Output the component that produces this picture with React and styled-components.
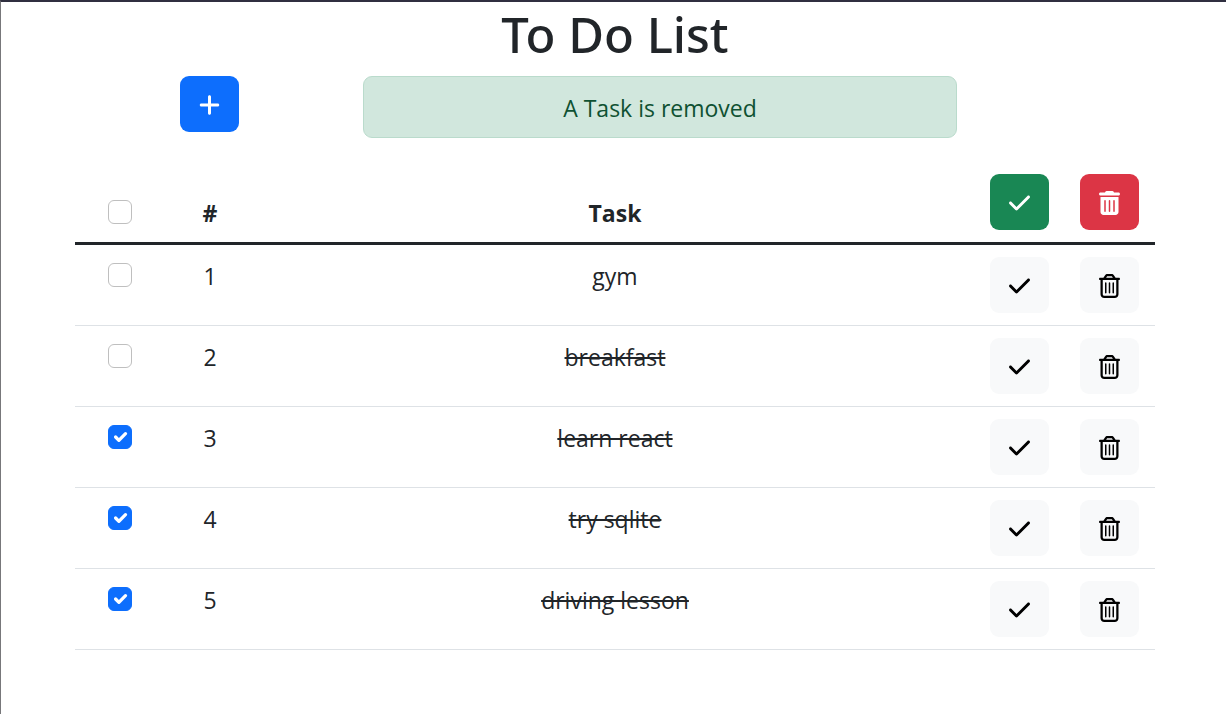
import React, { useState } from "react";
import styled, { createGlobalStyle } from "styled-components";
import { FaCheck, FaPlus, FaRegTrashCan, FaTrashCan } from "react-icons/fa6";

const GlobalStyle = createGlobalStyle`
  *, *::before, *::after { box-sizing: border-box; }
  body {
    margin: 0;
    background: #fff;
    color: #212529;
    font-family: "Segoe UI", "Open Sans", "Noto Sans", sans-serif;
    font-size: 23px;
    line-height: 36px;
  }
`;

const Page = styled.main`
  min-height: 100vh;
  padding: 0 71px 64px 74px;
  border-top: 2px solid #302f40;
  border-left: 1px solid #77777a;
`;

const Title = styled.h1`
  margin: 0 0 10px;
  font-family: "Segoe UI", "Noto Sans", sans-serif;
  font-size: 49px;
  font-weight: 500;
  line-height: 64px;
  text-align: center;
`;

const Toolbar = styled.div`
  display: grid;
  grid-template-columns: repeat(12, 1fr);
  align-items: start;
  margin-bottom: 24px;
`;

const AddCell = styled.div`
  grid-column: 2 / span 1;
  display: flex;
  justify-content: center;
`;

const AlertCell = styled.div`
  grid-column: 4 / span 7;
  padding: 0 18px;
`;

const Alert = styled.div`
  padding: 13px 24px 11px;
  border: 1px solid #badbcc;
  border-radius: 9px;
  background: #d1e7dd;
  color: #0f5132;
  text-align: center;
`;

const palette = {
  primary: { background: "#0d6efd", color: "#fff" },
  success: { background: "#198754", color: "#fff" },
  danger: { background: "#dc3545", color: "#fff" },
  light: { background: "#f8f9fa", color: "#000" },
};

const IconButton = styled.button`
  display: inline-flex;
  align-items: center;
  justify-content: center;
  width: 59px;
  height: 56px;
  margin: 0 1px 0 0;
  padding: 2px 0 0;
  border: 0;
  border-radius: 9px;
  background: ${({ $variant }) => palette[$variant].background};
  color: ${({ $variant }) => palette[$variant].color};
  font-size: 24px;
  vertical-align: top;
  cursor: pointer;

  svg {
    display: block;
    width: 21px;
    height: 24px;
  }
`;

const TaskTable = styled.table`
  width: 100%;
  table-layout: fixed;
  border-collapse: separate;
  border-spacing: 0;
  text-align: center;
`;

const Column = styled.col`
  width: ${({ $span }) => ($span * 100) / 12}%;
`;

const HeadCell = styled.th`
  padding: 12px;
  border-bottom: 3px solid #212529;
  font-weight: 700;
  line-height: 34px;
  vertical-align: bottom;
`;

const Cell = styled.td`
  padding: 12px;
  border-bottom: 1px solid #dee2e6;
  line-height: 38px;
  vertical-align: top;
  text-decoration: ${({ $done }) => ($done ? "line-through 2px" : "none")};
`;

const Checkbox = styled.input`
  appearance: none;
  display: block;
  width: 24px;
  height: 24px;
  margin: 6px auto;
  border: 1px solid #bfbfbf;
  border-radius: 6px;
  background: #fff center / contain no-repeat;

  &:checked {
    border-color: #0d6efd;
    background-color: #0d6efd;
    background-image: url("data:image/svg+xml,%3csvg xmlns='http://www.w3.org/2000/svg' viewBox='0 0 20 20'%3e%3cpath fill='none' stroke='%23fff' stroke-linecap='round' stroke-linejoin='round' stroke-width='3' d='M6 10l3 3l6-6'/%3e%3c/svg%3e");
  }
`;

const initialTasks = [
  { id: 1, name: "gym", done: false, selected: false },
  { id: 2, name: "breakfast", done: true, selected: false },
  { id: 3, name: "learn react", done: true, selected: true },
  { id: 4, name: "try sqlite", done: true, selected: true },
  { id: 5, name: "driving lesson", done: true, selected: true },
];

export default function App() {
  const [tasks, setTasks] = useState(initialTasks);

  const update = (match, change) =>
    setTasks((list) => list.map((t) => (match(t) ? { ...t, ...change(t) } : t)));
  const remove = (match) => setTasks((list) => list.filter((t) => !match(t)));
  const allSelected = tasks.length > 0 && tasks.every((t) => t.selected);

  return (
    <>
      <GlobalStyle />
      <Page>
        <Title>To Do List</Title>
        <Toolbar>
          <AddCell>
            <IconButton type="button" $variant="primary" aria-label="Add task">
              <FaPlus />
            </IconButton>
          </AddCell>
          <AlertCell>
            <Alert role="alert">A Task is removed</Alert>
          </AlertCell>
        </Toolbar>
        <TaskTable>
          <colgroup>
            <Column $span={1} />
            <Column $span={1} />
            <Column $span={8} />
            <Column $span={1} />
            <Column $span={1} />
          </colgroup>
          <thead>
            <tr>
              <HeadCell scope="col">
                <Checkbox
                  type="checkbox"
                  aria-label="Select all tasks"
                  checked={allSelected}
                  onChange={() => update(() => true, () => ({ selected: !allSelected }))}
                />
              </HeadCell>
              <HeadCell scope="col">#</HeadCell>
              <HeadCell scope="col">Task</HeadCell>
              <HeadCell scope="col">
                <IconButton
                  type="button"
                  $variant="success"
                  aria-label="Complete selected tasks"
                  onClick={() => update((t) => t.selected, () => ({ done: true }))}
                >
                  <FaCheck />
                </IconButton>
              </HeadCell>
              <HeadCell scope="col">
                <IconButton
                  type="button"
                  $variant="danger"
                  aria-label="Delete selected tasks"
                  onClick={() => remove((t) => t.selected)}
                >
                  <FaTrashCan />
                </IconButton>
              </HeadCell>
            </tr>
          </thead>
          <tbody>
            {tasks.map((task, index) => (
              <tr key={task.id}>
                <Cell>
                  <Checkbox
                    type="checkbox"
                    aria-labelledby={`task-${task.id}`}
                    checked={task.selected}
                    onChange={() =>
                      update((t) => t.id === task.id, (t) => ({ selected: !t.selected }))
                    }
                  />
                </Cell>
                <Cell>{index + 1}</Cell>
                <Cell id={`task-${task.id}`} $done={task.done}>
                  {task.name}
                </Cell>
                <Cell>
                  <IconButton
                    type="button"
                    $variant="light"
                    aria-label={`Complete ${task.name}`}
                    onClick={() => update((t) => t.id === task.id, (t) => ({ done: !t.done }))}
                  >
                    <FaCheck />
                  </IconButton>
                </Cell>
                <Cell>
                  <IconButton
                    type="button"
                    $variant="light"
                    aria-label={`Delete ${task.name}`}
                    onClick={() => remove((t) => t.id === task.id)}
                  >
                    <FaRegTrashCan />
                  </IconButton>
                </Cell>
              </tr>
            ))}
          </tbody>
        </TaskTable>
      </Page>
    </>
  );
}
